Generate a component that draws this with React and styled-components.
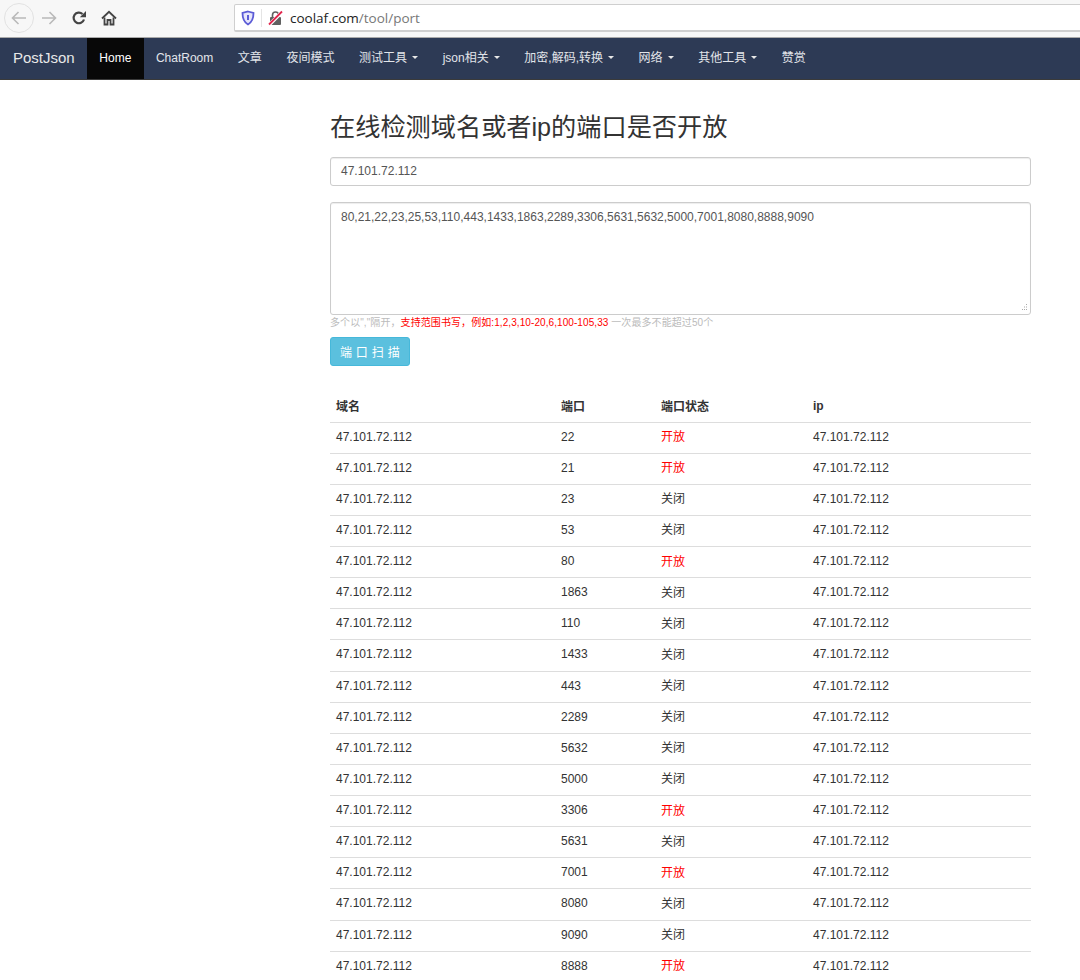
import React from "react";
import styled, { createGlobalStyle } from "styled-components";

const GlobalStyle = createGlobalStyle`
  html, body {
    margin: 0;
    padding: 0;
    background: #fff;
    overflow: hidden;
  }
  body {
    font-family: "Liberation Sans", "Noto Sans CJK SC", sans-serif;
    font-size: 12px;
    color: #333;
  }
`;

const Page = styled.div`
  width: 1080px;
  height: 980px;
  overflow: hidden;
`;

const BrowserBar = styled.div`
  display: flex;
  align-items: center;
  height: 38px;
  background: #f7f7f7;
  border-bottom: 1px solid #aaa;
  padding: 0 0 1px 4px;
  box-sizing: border-box;
  overflow: hidden;
`;

const BackButton = styled.div`
  display: flex;
  flex: none;
  align-items: center;
  justify-content: center;
  width: 30px;
  height: 30px;
  border: 1px solid #e2e2e2;
  border-radius: 50%;
  box-sizing: border-box;
  color: #b9b9b9;
`;

const ToolButton = styled.div`
  display: flex;
  flex: none;
  align-items: center;
  justify-content: center;
  width: 30px;
  color: ${(p) => p.$color};
`;

const UrlBox = styled.div`
  display: flex;
  flex: none;
  align-items: center;
  width: 860px;
  height: 28px;
  margin-left: 110px;
  background: #fff;
  border: 2px solid #cfcfcf;
  border-width: 1px 1px 2px 1px;
  border-radius: 2px;
  box-sizing: border-box;
`;

const ShieldIcon = styled.svg`
  flex: none;
  width: 14px;
  height: 16px;
  margin-left: 6px;
`;

const LockIcon = styled.svg`
  flex: none;
  width: 15px;
  height: 16px;
`;

const Separator = styled.span`
  flex: none;
  width: 1px;
  height: 18px;
  margin: 0 6px;
  background: #e4e4e4;
`;

const UrlText = styled.span`
  margin-left: 7px;
  font-family: "Open Sans", sans-serif;
  font-size: 13.5px;
  color: #222;
`;

const UrlPath = styled.span`
  color: #777;
`;

const Navbar = styled.nav`
  display: flex;
  align-items: stretch;
  height: 42px;
  background: #2d3a55;
  border-bottom: 1px solid #3a3a3a;
  box-sizing: border-box;
`;

const Brand = styled.div`
  display: flex;
  align-items: center;
  width: 87px;
  padding: 0 0 2px 13px;
  box-sizing: border-box;
  font-size: 15px;
  color: #e8e8e8;
`;

const NavItem = styled.div`
  display: flex;
  align-items: center;
  padding: 0 12.3px ${(p) => (p.$cjk ? 4 : 2)}px;
  font-size: 12px;
  color: ${(p) => (p.$active ? "#fff" : "#e2e5ea")};
  background: ${(p) => (p.$active ? "#080808" : "transparent")};
  white-space: nowrap;
`;

const Caret = styled.span`
  width: 0;
  height: 0;
  margin-left: 5px;
  margin-top: 2px;
  border-top: 3px solid #e8e8e8;
  border-left: 3px solid transparent;
  border-right: 3px solid transparent;
`;

const Main = styled.main`
  width: 701px;
  margin-left: 330px;
`;

const Title = styled.h1`
  margin: 28px 0 11px;
  font-size: 25.2px;
  font-weight: 400;
  line-height: 38px;
  color: #333;
`;

const HostInput = styled.div`
  height: 29px;
  padding: 0 10px;
  line-height: 26px;
  box-sizing: border-box;
  border: 1px solid #ccc;
  border-radius: 3px;
  box-shadow: inset 0 1px 1px rgba(0, 0, 0, 0.075);
  color: #555;
`;

const PortArea = styled.div`
  position: relative;
  height: 113px;
  margin-top: 16px;
  padding: 6px 10px;
  line-height: 16px;
  box-sizing: border-box;
  border: 1px solid #ccc;
  border-radius: 3px;
  box-shadow: inset 0 1px 1px rgba(0, 0, 0, 0.075);
  color: #555;
`;

const Grip = styled.svg`
  position: absolute;
  right: 2px;
  bottom: 2px;
  width: 9px;
  height: 9px;
`;

const Hint = styled.p`
  margin: 1px 0 0;
  font-size: 10px;
  line-height: 13px;
  letter-spacing: 0.08px;
  color: #bbb;
`;

const HintRed = styled.span`
  color: #f00;
`;

const ScanButton = styled.div`
  display: flex;
  align-items: center;
  justify-content: center;
  width: 80px;
  height: 29px;
  margin-top: 8px;
  letter-spacing: 0.3px;
  font-size: 12px;
  white-space: pre;
  box-sizing: border-box;
  color: #fff;
  background: #5bc0de;
  border: 1px solid #46b8da;
  border-radius: 3px;
`;

const Table = styled.table`
  width: 701px;
  margin-top: 24px;
  border-collapse: collapse;
  table-layout: fixed;
`;

const HeadCell = styled.th`
  height: 32px;
  padding: 0 6px;
  box-sizing: border-box;
  text-align: left;
  font-size: 12px;
  font-weight: 700;
  color: #333;
  border-bottom: 1px solid #ddd;
`;

const Cell = styled.td`
  height: 31.14px;
  padding: 0 6px 2px;
  box-sizing: border-box;
  font-size: 12px;
  color: #333;
  border-bottom: 1px solid #ddd;
`;

const StatusCell = styled(Cell)`
  padding-bottom: 4px;
  color: ${(p) => (p.$open ? "#f00" : "#333")};
`;

const ip = "47.101.72.112";
const rows = [
  ["22", true],
  ["21", true],
  ["23", false],
  ["53", false],
  ["80", true],
  ["1863", false],
  ["110", false],
  ["1433", false],
  ["443", false],
  ["2289", false],
  ["5632", false],
  ["5000", false],
  ["3306", true],
  ["5631", false],
  ["7001", true],
  ["8080", false],
  ["9090", false],
  ["8888", true],
];

const menu = [
  { label: "文章" },
  { label: "夜间模式" },
  { label: "测试工具", caret: true },
  { label: "json相关", caret: true },
  { label: "加密,解码,转换", caret: true },
  { label: "网络", caret: true },
  { label: "其他工具", caret: true },
  { label: "赞赏" },
];

const App = () => (
  <Page>
    <GlobalStyle />
    <BrowserBar>
      <BackButton>
        <svg width="18" height="18" viewBox="0 0 18 18" fill="none" stroke="currentColor" strokeWidth="1.6">
          <path d="M16 9H2.500M8.500 3 2.500 9l6 6" />
        </svg>
      </BackButton>
      <ToolButton $color="#b9b9b9">
        <svg width="18" height="18" viewBox="0 0 18 18" fill="none" stroke="currentColor" strokeWidth="1.6">
          <path d="M2 9h13.500M9.500 3l6 6-6 6" />
        </svg>
      </ToolButton>
      <ToolButton $color="#444">
        <svg width="16" height="16" viewBox="0 0 16 16" fill="none">
          <path d="M13 9.500A5.300 5.300 0 1 1 11.500 4" stroke="currentColor" strokeWidth="2.200" />
          <path d="M15 1v6.200H8.800z" fill="currentColor" />
        </svg>
      </ToolButton>
      <ToolButton $color="#444">
        <svg width="16" height="16" viewBox="0 0 16 16" fill="none">
          <path d="M1 8.500 8 1.800l7 6.700" stroke="currentColor" strokeWidth="1.800" />
          <path d="M3.500 7.500V14.500h3V10h3v4.500h3V7.500" stroke="currentColor" strokeWidth="1.800" />
        </svg>
      </ToolButton>
      <UrlBox>
        <ShieldIcon viewBox="0 0 14 16">
          <path d="M7 1.500 12.500 3c0 5-1.200 9-5.500 11.500C2.700 12 1.500 8 1.500 3z" fill="#e6e6fb" stroke="#5b5bd6" strokeWidth="1.800" />
          <path d="M7 5v5" stroke="#5b5bd6" strokeWidth="2" />
        </ShieldIcon>
        <Separator />
        <LockIcon viewBox="0 0 15 16">
          <rect x="2" y="7" width="11" height="8" rx="1" fill="#606060" />
          <path d="M4.500 7V5a3 3 0 0 1 6 0v2" fill="none" stroke="#606060" strokeWidth="1.600" />
          <path d="M1 15 14 2" stroke="#fff" strokeWidth="3.500" />
          <path d="M1 14.500 14 1.500" stroke="#e2264d" strokeWidth="1.800" />
        </LockIcon>
        <UrlText>
          coolaf.com<UrlPath>/tool/port</UrlPath>
        </UrlText>
      </UrlBox>
    </BrowserBar>
    <Navbar>
      <Brand>PostJson</Brand>
      <NavItem $active>Home</NavItem>
      <NavItem>ChatRoom</NavItem>
      {menu.map((m) => (
        <NavItem key={m.label} $cjk>
          {m.label}
          {m.caret && <Caret />}
        </NavItem>
      ))}
    </Navbar>
    <Main>
      <Title>在线检测域名或者ip的端口是否开放</Title>
      <HostInput>{ip}</HostInput>
      <PortArea>
        80,21,22,23,25,53,110,443,1433,1863,2289,3306,5631,5632,5000,7001,8080,8888,9090
        <Grip viewBox="0 0 9 9">
          <path d="M7 1h1v1H7zM5 3.500h1v1H5zM7 3.500h1v1H7zM3 6h1v1H3zM5 6h1v1H5zM7 6h1v1H7z" fill="#aaa" />
        </Grip>
      </PortArea>
      <Hint>
        多个以","隔开，<HintRed>支持范围书写，例如:1,2,3,10-20,6,100-105,33</HintRed> 一次最多不能超过50个
      </Hint>
      <ScanButton>端 口 扫 描</ScanButton>
      <Table>
        <colgroup>
          <col width="225" />
          <col width="100" />
          <col width="152" />
          <col width="224" />
        </colgroup>
        <thead>
          <tr>
            <HeadCell>域名</HeadCell>
            <HeadCell>端口</HeadCell>
            <HeadCell>端口状态</HeadCell>
            <HeadCell>ip</HeadCell>
          </tr>
        </thead>
        <tbody>
          {rows.map(([port, open]) => (
            <tr key={port}>
              <Cell>{ip}</Cell>
              <Cell>{port}</Cell>
              <StatusCell $open={open}>{open ? "开放" : "关闭"}</StatusCell>
              <Cell>{ip}</Cell>
            </tr>
          ))}
        </tbody>
      </Table>
    </Main>
  </Page>
);

export default App;
